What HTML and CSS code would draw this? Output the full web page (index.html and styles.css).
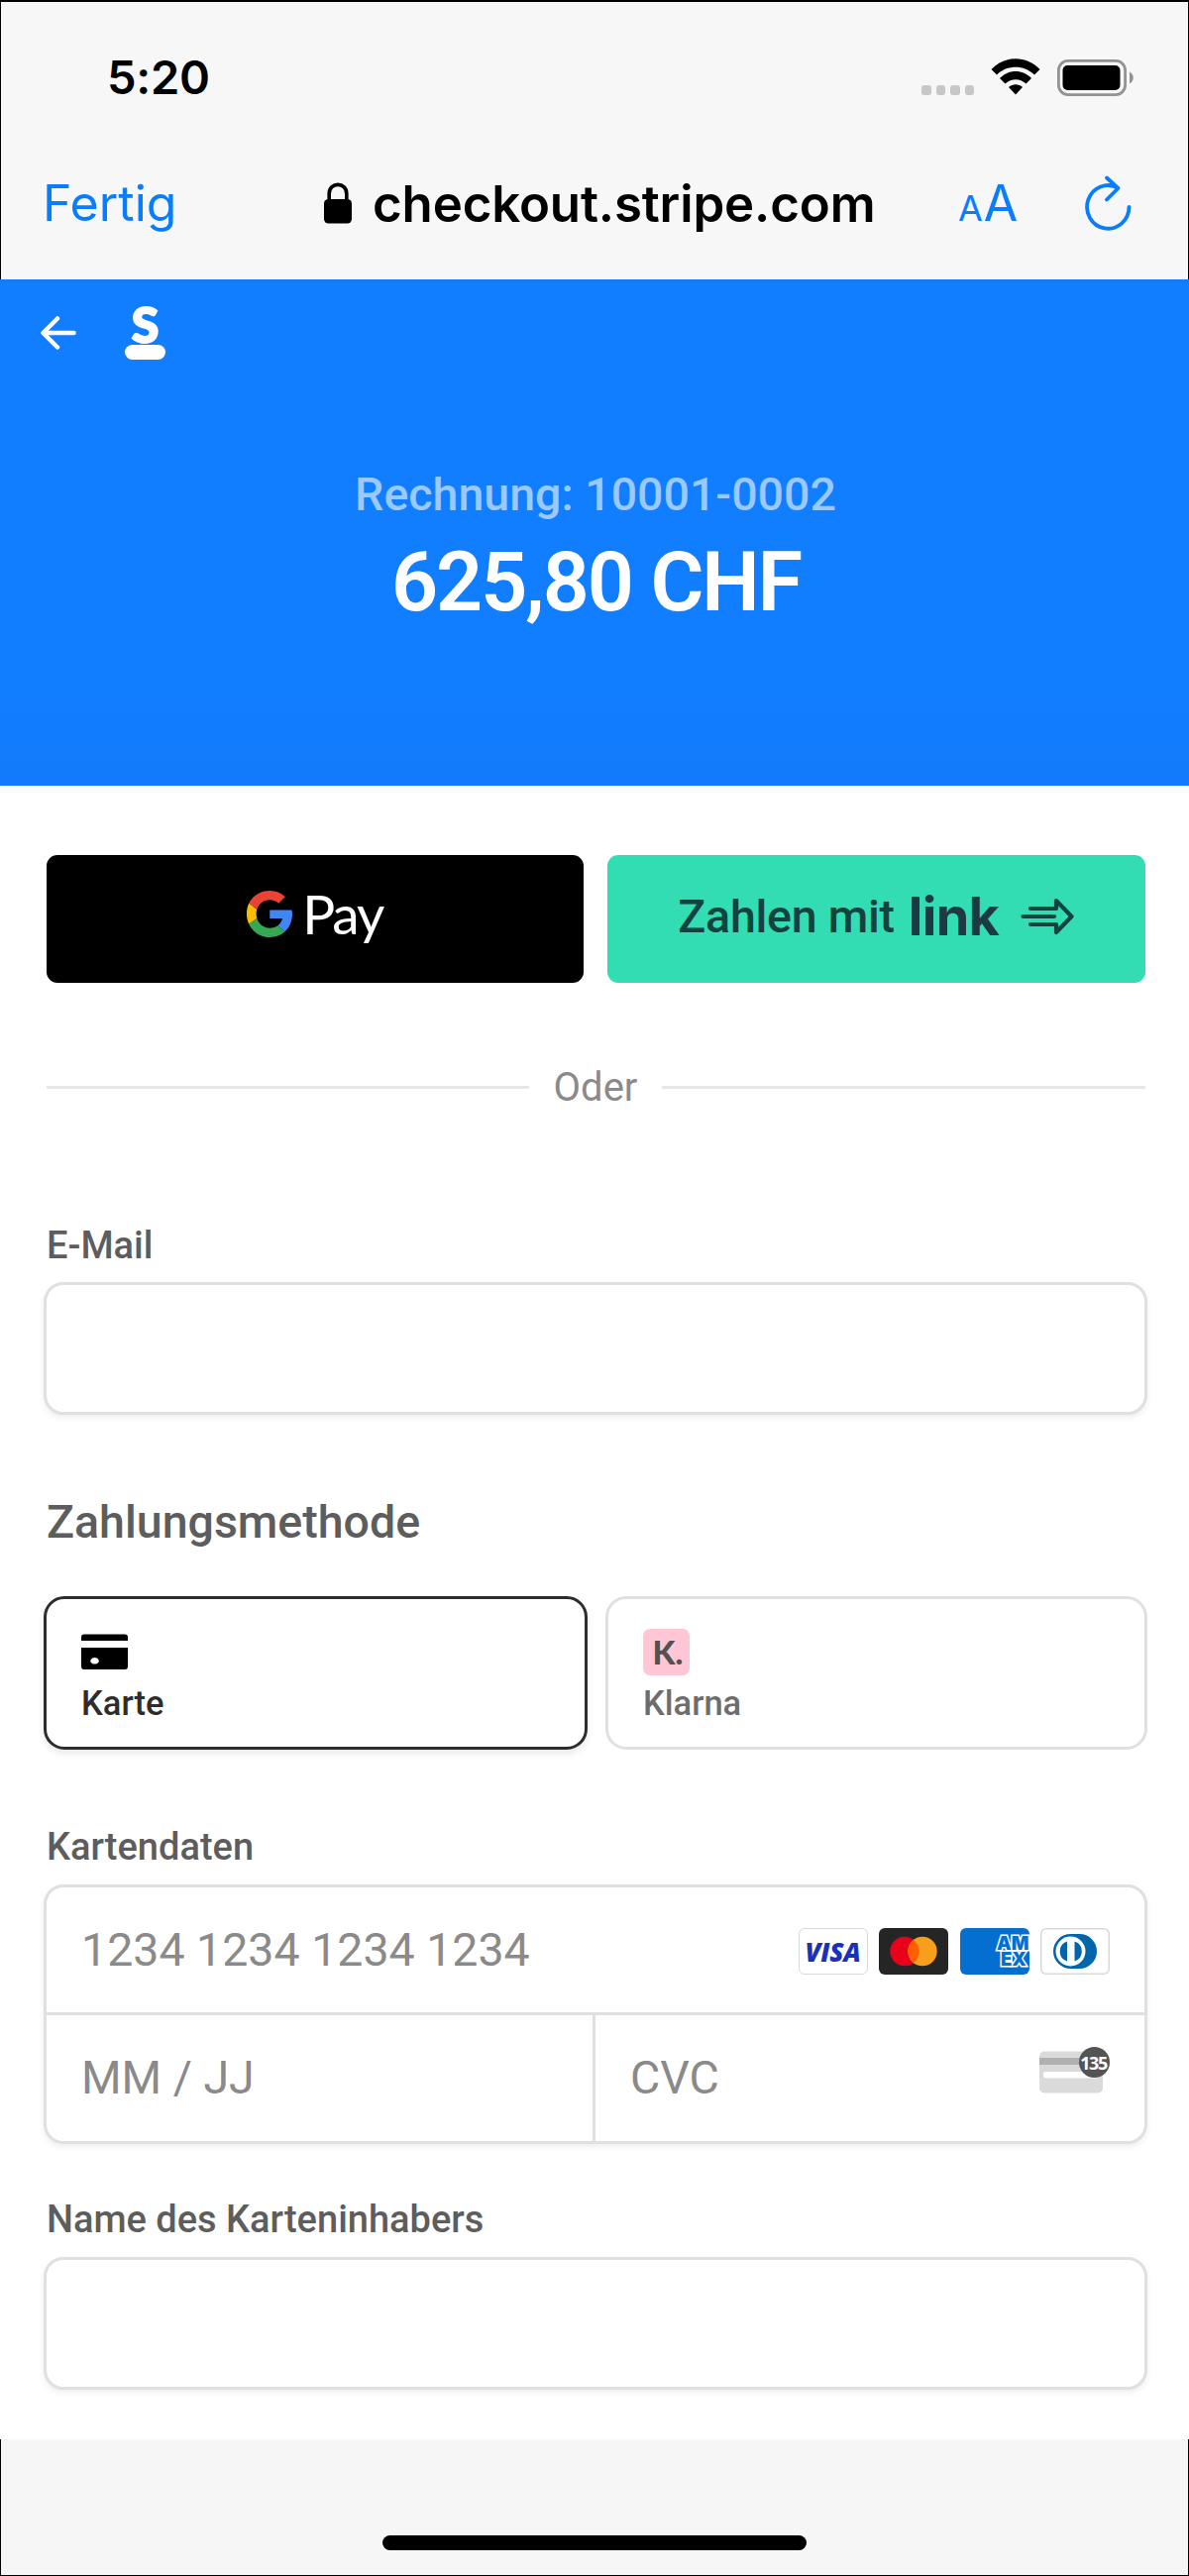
FILE: index.html
```html
<!DOCTYPE html>
<html lang="de">
<head>
<meta charset="utf-8">
<title>Stripe Checkout</title>
<link rel="stylesheet" href="styles.css">
</head>
<body>
<div class="phone">
  <header class="chrome">
    <div class="status">
      <span class="time">5:20</span>
      <div class="indicators">
        <div class="signal"><i></i><i></i><i></i><i></i></div>
        <svg class="wifi" width="50" height="37" viewBox="0 0 50 37">
          <path d="M0.5 11C14-3.500 36-3.500 49.500 11L44 16.500C33.500 6 16.500 6 6 16.500Z"/>
          <path d="M9 20C18 10.700 32 10.700 41 20L35.500 25.500C29.500 19.700 20.500 19.700 14.500 25.500Z"/>
          <path d="M18 29C22 25.200 28 25.200 32 29L25 36.500Z"/>
        </svg>
        <svg class="battery" width="78" height="37" viewBox="0 0 78 37">
          <rect x="1.400" y="1.400" width="67.200" height="34.200" rx="9.500" fill="none" stroke="#939393" stroke-width="2.800"/>
          <rect x="5.500" y="6" width="58" height="25" rx="5"/>
          <path d="M73 12.500c5 2.500 5 9.500 0 12z" fill="#939393"/>
        </svg>
      </div>
    </div>
    <div class="address">
      <span class="done">Fertig</span>
      <svg class="lock" width="28" height="42" viewBox="0 0 28 42">
        <path d="M5.200 18V11.500C5.200-.7 22.800-.7 22.800 11.500V18" fill="none" stroke="#000" stroke-width="3.600"/>
        <rect y="17" width="28" height="24.500" rx="4.500"/>
      </svg>
      <span class="host">checkout.stripe.com</span>
      <span class="sizer"><small>A</small>A</span>
      <svg class="reload" width="48" height="56" viewBox="0 0 48 56" fill="none" stroke="#087eff" stroke-width="3.800" stroke-linecap="round" stroke-linejoin="round">
        <path d="M44.500 32A21.200 21.800 0 1 1 33.500 12.800M22 2.500L33.500 13L22 24.500" />
      </svg>
    </div>
  </header>

  <section class="hero">
    <div class="brand">
      <svg width="36" height="34" viewBox="0 0 36 34" fill="none" stroke="#fff" stroke-width="4.500" stroke-linecap="round" stroke-linejoin="round"><path d="M33.500 17H3M17 2.500L2.500 17L17 31.500"/></svg>
      <div class="logo"><b>S</b><i></i></div>
    </div>
    <p class="invoice">Rechnung: 10001-0002</p>
    <p class="amount">625,80 CHF</p>
  </section>

  <main class="form">
    <div class="wallets">
      <button class="wallet gpay">
        <svg width="46" height="47" viewBox="0 0 46 47">
          <path fill="#4285f4" d="M45.500 19.500H23.300V28H36c-.6 3-2.200 5.500-4.700 7.300l7.100 6.200c4.600-4.300 7.600-10.500 7.600-18 0-1.400-.2-2.800-.5-4z"/>
          <path fill="#34a853" d="M23.300 47c6.200 0 11.300-2.100 15.100-5.500l-7.100-6.200c-2.100 1.500-4.800 2.400-8 2.400-6.100 0-11.200-4.200-13-9.700l-8.200 5.500C5.900 41.500 14 47 23.300 47z"/>
          <path fill="#fbbc04" d="M10.300 28c-1-3-1-6.200 0-9.200l-8-6.200C-.8 19-.8 27 2.100 33.500z"/>
          <path fill="#ea4335" d="M23.300 9.300c3.500 0 6.500 1.200 8.900 3.500l6.600-6.600C34.700 2.200 29.400 0 23.300 0 14 0 6 5 2.300 12.600l8 6.200c1.800-5.500 6.900-9.500 13-9.500z"/>
        </svg>
        <span class="pay">Pay</span>
      </button>
      <button class="wallet link">
        <span class="with">Zahlen mit</span>
        <span class="linkmark">link</span>
        <svg width="54" height="38" viewBox="0 0 54 38" fill="none" stroke="#12443f" stroke-width="4.200" stroke-linecap="round" stroke-linejoin="round">
          <path d="M10 11H36V3L51.500 19L36 35V27H10M2.500 19H34"/>
        </svg>
      </button>
    </div>

    <div class="or"><span>Oder</span></div>

    <label class="label" for="mail">E-Mail</label>
    <input class="field" id="mail" type="text">

    <h2 class="heading">Zahlungsmethode</h2>
    <div class="methods">
      <div class="method selected">
        <svg width="47" height="47" viewBox="0 0 47 47">
          <path d="M3 5.500H44Q47 5.500 47 8.500V12H0V8.500Q0 5.500 3 5.500Z"/>
          <path fill-rule="evenodd" d="M0 19H47V38Q47 41 44 41H3Q0 41 0 38ZM13.500 29a4.300 3.300 0 1 0 .1 0z"/>
        </svg>
        <span>Karte</span>
      </div>
      <div class="method">
        <div class="klarna">K.</div>
        <span>Klarna</span>
      </div>
    </div>

    <div class="label card-label">Kartendaten</div>
    <div class="card">
      <div class="row">
        <span>1234 1234 1234 1234</span>
        <div class="brands">
          <div class="chip visa">VISA</div>
          <div class="chip mc">
            <svg width="70" height="47" viewBox="0 0 70 47"><circle cx="26" cy="23.500" r="14.700" fill="#eb001b"/><circle cx="44" cy="23.500" r="14.700" fill="#f79e1b"/><path d="M35 11.900a14.700 14.700 0 0 1 0 23.200a14.700 14.700 0 0 1 0-23.200z" fill="#ff5f00"/></svg>
          </div>
          <div class="chip">
            <svg class="amex" width="70" height="47" viewBox="0 0 70 47"><rect width="70" height="47" fill="#056fd0"/><text><tspan x="37" y="21.500">AM</tspan><tspan x="41" y="37.500">EX</tspan></text></svg>
          </div>
          <div class="chip diners">
            <svg width="70" height="47" viewBox="0 0 70 47"><rect x="13" y="6" width="44" height="35" rx="17.500" fill="#0165ac"/><circle cx="30.500" cy="23.500" r="15" fill="#fff"/><path d="M27 13.500v20a10.500 10.500 0 0 1 0-20zM34.500 13.500v20a10.500 10.500 0 0 0 0-20z" fill="#0165ac"/></svg>
          </div>
        </div>
      </div>
      <div class="row split">
        <div class="cell"><span>MM / JJ</span></div>
        <div class="cell"><span>CVC</span>
          <div class="cvc">
            <svg width="71" height="47" viewBox="0 0 71 47"><rect y="4.500" width="64" height="42" rx="5" fill="#dadada"/><rect y="11" width="64" height="7" fill="#b0b0b0"/><rect x="4" y="25" width="56" height="6.500" rx="2.500" fill="#fff"/><circle cx="55.500" cy="15.500" r="15.500" fill="#545454"/></svg>
            <b>135</b>
          </div>
        </div>
      </div>
    </div>

    <label class="label name-label" for="name">Name des Karteninhabers</label>
    <input class="field name-field" id="name" type="text">
  </main>

  <footer class="bottom"><div class="home"></div></footer>
</div>
</body>
</html>
```
FILE: styles.css
```css
* { box-sizing: border-box; margin: 0; padding: 0; }
body { background: #fff; font-family: Roboto, "Liberation Sans", sans-serif; }
svg { display: block; flex: none; }
.phone { width: 1200px; height: 2600px; display: flex; flex-direction: column; overflow: hidden; }

/* Browser chrome */
.chrome { height: 282px; flex: none; background: #f7f7f7; border: 1px solid #000; border-top-width: 2px; border-bottom: 0; font-family: Inter, sans-serif; }
.status { height: 120px; display: flex; justify-content: space-between; padding: 57px 54px 0 107px; }
.time { font-size: 47px; line-height: 38px; font-weight: 600; letter-spacing: -0.300px; }
.indicators { display: flex; align-items: flex-start; }
.signal { display: flex; gap: 5px; margin: 27px 17px 0 0; }
.signal i { width: 9.500px; height: 9.500px; border-radius: 3px; background: #c7c7c7; }
.battery { margin: 1px 0 0 17px; }
.address { display: flex; align-items: center; height: 64px; margin-top: 51px; padding-left: 42px; white-space: nowrap; }
.done { width: 284px; font-size: 50px; color: #087eff; }
.lock { margin-right: 21px; }
.host { width: 591px; font-size: 51px; font-weight: 560; letter-spacing: -0.150px; }
.sizer { width: 128px; font-size: 50px; color: #087eff; }
.sizer small { font-size: 36px; letter-spacing: 1px; }

/* Summary */
.hero { height: 511px; flex: none; background: linear-gradient(#117dff 84%, #117bfb); color: #fff; text-align: center; }
.brand { height: 190px; display: flex; align-items: flex-start; padding: 28px 0 0 41px; }
.brand > svg { margin-top: 9px; }
.logo { width: 41px; margin-left: 49px; display: flex; flex-direction: column; align-items: center; }
.logo b { font: 900 50px/38px Lato, sans-serif; -webkit-text-stroke: 2px #fff; margin: -2px 0 2px; }
.logo i { width: 41px; height: 15px; border-radius: 7.500px; background: #fff; }
.invoice { font-size: 46.500px; line-height: 54px; font-weight: 500; color: #99c9ff; padding-left: 2px; }
.amount { font-size: 82.500px; line-height: 96px; font-weight: 600; letter-spacing: -2px; margin-top: 14px; padding-left: 3px; }

/* Form */
.form { height: 1669px; flex: none; padding: 70px 42px 0 44px; }
.wallets { display: grid; grid-template-columns: 1fr 1fr; gap: 24px; padding: 0 2.500px; height: 129px; }
.wallet { border: 0; border-radius: 11px; display: flex; align-items: center; justify-content: center; font-family: inherit; white-space: nowrap; }
.gpay { background: #000; color: #fff; }
.gpay svg { margin-top: -10px; }
.pay { font: 400 55px/60px Lato, sans-serif; letter-spacing: -2px; margin: -11px 0 0 10px; }
.link { background: #33ddb3; color: #12443f; padding-bottom: 6px; }
.with { font-size: 46.500px; font-weight: 500; letter-spacing: -0.250px; }
.linkmark { font: 700 54px/60px Inter, sans-serif; letter-spacing: -0.700px; color: #1d3944; margin: 0 22px 0 14px; }
.or { display: flex; align-items: center; gap: 25px; height: 50px; margin: 80px 2.500px 0; font-size: 40px; color: #8a8a8a; }
.or::before, .or::after { content: ""; flex: 1; height: 3px; background: #e6e6e6; }
.label { display: block; font-size: 38px; line-height: 44px; font-weight: 500; color: #5d5d5d; margin: 113px 0 0 3px; }
.field { display: block; width: 100%; height: 134px; margin-top: 15px; background: #fff; border: 3px solid #e0e0e0; border-radius: 20px; box-shadow: 0 3px 6px rgba(0,0,0,.07); }
.heading { font-size: 46.500px; line-height: 54px; font-weight: 500; color: #5d5d5d; margin: 81px 0 0 3px; }
.methods { display: grid; grid-template-columns: 549px 547px; gap: 18px; margin-top: 48px; }
.method { height: 155px; padding: 30px 35px; border: 3px solid #e0e0e0; border-radius: 21px; font-size: 34.500px; line-height: 40px; font-weight: 500; color: #6d6d6d; background: #fff; }
.method > span { display: block; margin-top: 8px; }
.selected { border-color: #2d2d2d; color: #2d2d2d; box-shadow: 0 4px 7px rgba(0,0,0,.09); }
.klarna { width: 47px; height: 47px; border-radius: 7px; background: #ffc7d6; color: #545052; font: 900 33px/47px Lato, sans-serif; text-align: center; padding-left: 3px; }
.card-label { margin-top: 76px; }
.card { height: 262px; margin-top: 16px; border: 3px solid #e0e0e0; border-radius: 20px; box-shadow: 0 3px 6px rgba(0,0,0,.07); font-size: 46.500px; color: #8a8a8a; overflow: hidden; }
.row { height: 126px; padding: 0 35px; display: flex; align-items: center; justify-content: space-between; }
.split { height: 130px; padding: 0; border-top: 3px solid #e0e0e0; align-items: stretch; }
.cell { display: flex; align-items: center; justify-content: space-between; width: 551px; padding: 0 35px 2px; }
.cell + .cell { width: auto; flex: 1; border-left: 3px solid #e0e0e0; }
.brands { display: flex; gap: 11.500px; margin-top: 3px; }
.chip { width: 70px; height: 47px; border-radius: 6px; overflow: hidden; }
.visa { border: 1.500px solid #d9d9d9; color: #1a30b8; font: italic 800 26px/46px "Open Sans", sans-serif; letter-spacing: -0.200px; text-align: center; }
.mc { background: #252525; }
.amex text { font: 900 18.500px Inter, sans-serif; fill: #056fd0; stroke: #fff; stroke-width: 3px; paint-order: stroke fill; }
.diners { box-shadow: inset 0 0 0 1.500px #d9d9d9; }
.cvc { position: relative; width: 71px; margin-top: -14px; }
.cvc b { position: absolute; left: 39px; top: 0; width: 31px; text-align: center; font: 700 18px/32px "Open Sans", sans-serif; letter-spacing: -1.500px; color: #fff; }
.name-label { margin-top: 54px; }
.name-field { margin-top: 16px; }
.bottom { flex: 1; background: #f6f6f6; border: 1px solid #000; border-top: 0; padding-top: 97px; }
.home { width: 428px; height: 15px; margin: 0 auto; border-radius: 8px; background: #000; }
```
